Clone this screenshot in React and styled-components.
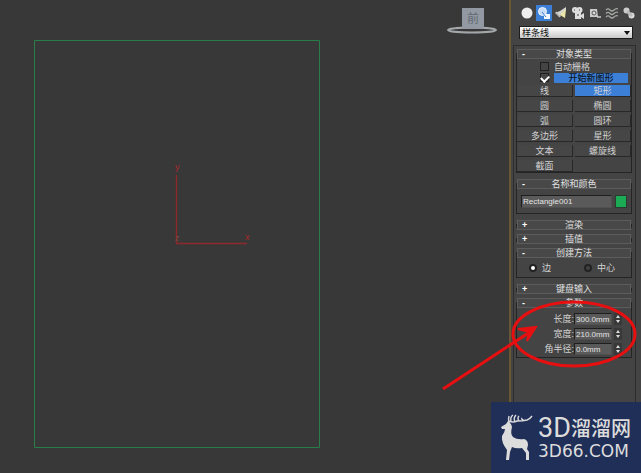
import { useState } from 'react'
import styled, { createGlobalStyle } from 'styled-components'

const GlobalStyle = createGlobalStyle`
  * {
    box-sizing: border-box;
  }

  body {
    margin: 0;
    background: #383838;
    overflow: hidden;
  }

  body, button, input, select {
    font-family: "Liberation Sans", "Noto Sans CJK SC", sans-serif;
    font-size: 9px;
    line-height: 10px;
    color: #d2d2d2;
  }
`

const Page = styled.div`
  display: flex;
  min-height: 100vh;
`

/* Viewport */

const Viewport = styled.main`
  position: relative;
  flex: 1;
  background: #383838;
  border-right: 2px solid #6a5630;
`

const Shape = styled.svg`
  position: absolute;
  left: 34px;
  top: 40px;
  width: 286px;
  height: 408px;
`

const ViewCube = styled.svg`
  position: absolute;
  top: 6px;
  right: 10px;
  width: 54px;
  height: 30px;
`

/* Command panel */

const Panel = styled.aside`
  display: flex;
  flex-direction: column;
  flex: 0 0 130px;
  min-width: 0;
  background: #444;
`

const Toolbar = styled.nav`
  display: flex;
  justify-content: space-between;
  padding: 5px 4px 5px 8px;
`

const Tool = styled.button`
  display: flex;
  align-items: center;
  justify-content: center;
  width: 16px;
  height: 16px;
  padding: 0;
  border: 0;
  background: ${props => props.$active ? '#3c7fd6' : 'transparent'};

  svg {
    width: 14px;
    height: 14px;
  }
`

const Category = styled.div`
  display: flex;
  position: relative;
  margin: 0 8px 6px;

  &::after {
    content: '';
    position: absolute;
    right: 3px;
    top: 5px;
    border: 3px solid transparent;
    border-top: 4px solid #111;
    pointer-events: none;
  }
`

const Select = styled.select`
  flex: 1;
  height: 13px;
  padding: 0 2px;
  appearance: none;
  border: 1px solid #1c1c1c;
  border-radius: 0;
  background: linear-gradient(#fff, #c9c9c9);
  color: #111;
`

const Rollouts = styled.div`
  display: flex;
  flex-direction: column;
  flex: 1;
  margin: 0 5px 0 2px;
  padding: 3px 3px 0 2px;
  border: 1px solid #2d2d2d;
  border-bottom: 0;
`

const Rollout = styled.section`
  position: relative;
  margin-bottom: ${props => props.$open ? '6px' : '4px'};
  padding: 0 1px ${props => props.$open ? '1px' : '0'};

  &::before {
    content: '';
    position: absolute;
    inset: 4px 0 0;
    border: 1px solid #242424;
    border-top: 0;
    pointer-events: none;
    ${props => !props.$open && 'border-bottom: 0; bottom: 2px;'}
  }
`

const Header = styled.button`
  position: relative;
  display: flex;
  align-items: center;
  width: 100%;
  height: 10px;
  padding: 0 12px 0 4px;
  border: 1px solid #5c5c5c;
  background: #484848;
  color: #e0e0e0;

  b {
    width: 8px;
    text-align: left;
    color: #fff;
  }

  span {
    flex: 1;
    text-align: center;
  }
`

const Body = styled.div`
  position: relative;
  padding: 2px 2px 0;
`

const CheckLine = styled.label`
  display: flex;
  align-items: center;
  gap: 5px;
  height: 11px;
  padding-left: 21px;
`

const Check = styled.input.attrs({ type: 'checkbox' })`
  display: grid;
  place-items: center;
  width: 9px;
  height: 9px;
  margin: 0;
  appearance: none;
  border: 1px solid #1f1f1f;
  background: #444;

  &:checked::before {
    content: '';
    width: 6px;
    height: 4px;
    border: solid #fff;
    border-width: 0 0 2px 2px;
    transform: rotate(-45deg);
  }
`

const StartShape = styled.span`
  flex: 1;
  height: 10px;
  margin-right: 1px;
  background: #3c7fd6;
  color: #0c1626;
  font-weight: 500;
  text-align: center;
`

const ButtonGrid = styled.div`
  display: grid;
  grid-template-columns: 1fr 1fr;
  grid-auto-rows: 1fr;
  gap: 3px 2px;
  height: 87px;
  margin: 2px -2px 0;
`

const TypeButton = styled.button`
  padding: 0;
  border: solid #282828;
  border-width: 0 1px 1px 0;
  background: ${props => props.$active ? '#3c7fd6' : '#464646'};
  color: #d2d2d2;
`

const NameLine = styled.div`
  display: flex;
  gap: 3px;
  padding: 4px 2px 5px;
`

const Field = styled.input`
  flex: ${props => props.$short ? '0 0 38px' : '1'};
  min-width: 0;
  width: 38px;
  height: ${props => props.$short ? '12px' : '13px'};
  padding: 0 1px;
  border: 1px solid #1e1e1e;
  border-right-color: #505050;
  border-bottom-color: #505050;
  background: #5a5a5a;
  font-size: 8px;
  color: #e4e4e4;
`

const Swatch = styled.button`
  width: 12px;
  height: 13px;
  padding: 0;
  border: 1px solid #2b3b30;
  background: #1bab55;
`

const RadioLine = styled.div`
  display: flex;
  justify-content: space-between;
  padding: 3px 14px 4px 10px;

  label {
    display: flex;
    align-items: center;
    gap: 5px;
  }
`

const Radio = styled.input.attrs({ type: 'radio' })`
  width: 8px;
  height: 8px;
  margin: 0;
  appearance: none;
  border: 2px solid #222;
  border-radius: 50%;
  background: #444;

  &:checked {
    background: #fff;
  }
`

const Params = styled.div`
  display: flex;
  flex-direction: column;
  gap: 3px;
  padding: 3px 7px 2px 0;
`

const ParamLine = styled.label`
  display: flex;
  align-items: center;
  justify-content: flex-end;
  height: 12px;
`

const Spinner = styled.svg`
  width: 8px;
  height: 12px;
  margin-left: 2px;
  background: #383838;
`

const Annotation = styled.svg`
  position: absolute;
  left: -76px;
  top: 0;
  width: 200px;
  height: 100px;
  overflow: visible;
  pointer-events: none;
`

/* Watermark over the bottom right corner */

const Watermark = styled.footer`
  position: fixed;
  right: 0;
  bottom: 0;
  display: flex;
  align-items: center;
  gap: 3px;
  width: 150px;
  height: 71px;
  padding-left: 8px;
  background: #202f57;
  color: #dcdcdc;

  svg {
    width: 36px;
    height: 48px;
  }
`

const Brand = styled.div`
  white-space: nowrap;
`

const BrandName = styled.div`
  display: flex;
  align-items: center;
  height: 26px;
  font-family: Roboto, sans-serif;
  font-size: 27px;
  line-height: 26px;

  span {
    font-family: "Noto Sans CJK SC", sans-serif;
    font-size: 20px;
    font-weight: 500;
  }
`

const BrandUrl = styled.div`
  font-family: "DejaVu Sans", sans-serif;
  font-size: 17px;
  line-height: 20px;
`

const tools = [
  { name: '创建', icon: <circle cx="7" cy="7" r="5.5" fill="#eee" /> },
  {
    name: '图形',
    icon: (
      <>
        <circle cx="5.5" cy="5.5" r="4" fill="#c9dcf5" stroke="#eef5ff" />
        <path d="M7 8h6v5H7z" fill="#f4f8ff" />
        <path d="M5 6l4 5" stroke="#3c7fd6" />
      </>
    ),
  },
  {
    name: '灯光',
    icon: (
      <>
        <path d="M1 7l5-2 6-4v3L8 9l-3 1z" fill="#d6d6d0" />
        <path d="M6 9l6-6-1 9z" fill="#e9e6a8" />
        <path d="M2 6l4 5" stroke="#bbb" strokeWidth="2" />
      </>
    ),
  },
  {
    name: '摄影机',
    icon: (
      <>
        <circle cx="4" cy="4" r="3" fill="#ddd" />
        <circle cx="8.500" cy="4" r="3" fill="#ddd" />
        <path d="M4 6h6v7H4zM10 9l3-2v6l-3-2z" fill="#ddd" />
        <path d="M3 4h1M8 4h1M6 9h2" stroke="#444" />
      </>
    ),
  },
  {
    name: '辅助对象',
    icon: (
      <>
        <path d="M2 3h7l1 8H2z" fill="#ccc" />
        <circle cx="6" cy="7" r="2" fill="#ddd" stroke="#555" />
        <path d="M9 11h4" stroke="#ccc" strokeWidth="1.5" />
      </>
    ),
  },
  {
    name: '空间扭曲',
    icon: (
      <path
        d="M1 4q2-2 4 0t4 0t4-1M1 7.500q2-2 4 0t4 0t4-1M1 11q2-2 4 0t4 0t4-1"
        fill="none"
        stroke="#a5a9a5"
        strokeWidth="1.2"
      />
    ),
  },
  {
    name: '系统',
    icon: (
      <>
        <circle cx="4.500" cy="4.500" r="3" fill="#ccc" />
        <circle cx="9.500" cy="9.500" r="3" fill="#ddd" />
        <path d="M5 5l5 5" stroke="#bbb" strokeWidth="3" />
      </>
    ),
  },
]

const shapes = ['线', '矩形', '圆', '椭圆', '弧', '圆环', '多边形', '星形', '文本', '螺旋线', '截面']

const params = [
  { label: '长度:', value: '300.0mm' },
  { label: '宽度:', value: '210.0mm' },
  { label: '角半径:', value: '0.0mm' },
]

const Section = ({ title, open, children }) => {
  return (
    <Rollout $open={open}>
      <Header><b>{open ? '-' : '+'}</b><span>{title}</span></Header>
      {children && <Body>{children}</Body>}
    </Rollout>
  )
}

const Deer = () => {
  return (
    <svg viewBox="0 0 36 48" fill="#dcdcdc">
      <path d="M2 13L7 10L9 7L12 10L13 13Q11 20 14 23Q18 26 25 25Q29 26 29 31L28 35L30 38V46H27V39L23 34Q17 35 13 33L11 38L10 46H7L8 36Q2 28 3 22Q6 18 6 15L3 15Z" />
      <path
        d="M10 9Q9 5 10 2M10 7Q14 9 18 7Q24 7 28 6Q31 5 33 2M12 7Q11 3 14 1M16 8Q14 4 17 1M20 7Q18 4 20 2M25 7Q22 5 23 4"
        fill="none"
        stroke="#dcdcdc"
        strokeWidth="1.4"
      />
    </svg>
  )
}

const App = () => {
  const [active, setActive] = useState('矩形')

  return (
    <Page>
      <GlobalStyle />
      <Viewport>
        <Shape viewBox="0 0 286 408">
          <path d="M.5.5h285v407H.5z" fill="none" stroke="#277e48" />
          <path d="M142.500 135v68.500H213" fill="none" stroke="#8f282c" strokeWidth="1.300" />
          <g fill="#a8282c" fontSize="9">
            <text x="141" y="130">y</text>
            <text x="211" y="200">x</text>
            <text x="141" y="201" fill="#7d4a40">z</text>
          </g>
        </Shape>
        <ViewCube viewBox="0 0 54 30">
          <ellipse cx="27" cy="24" rx="24" ry="2.500" fill="none" stroke="#a4a8aa" strokeWidth="2" />
          <path d="M17 2h22v21H17z" fill="#9299a2" />
          <text x="28" y="17" textAnchor="middle" fontSize="12" fill="#626a74">前</text>
        </ViewCube>
      </Viewport>

      <Panel>
        <Toolbar>
          {tools.map(tool => (
            <Tool key={tool.name} aria-label={tool.name} $active={tool.name === '图形'}>
              <svg viewBox="0 0 14 14">{tool.icon}</svg>
            </Tool>
          ))}
        </Toolbar>
        <Category>
          <Select aria-label="类别">
            <option>样条线</option>
          </Select>
        </Category>

        <Rollouts>
          <Section title="对象类型" open>
            <CheckLine><Check />自动栅格</CheckLine>
            <CheckLine><Check defaultChecked /><StartShape>开始新图形</StartShape></CheckLine>
            <ButtonGrid>
              {shapes.map(shape => (
                <TypeButton key={shape} $active={shape === active} onClick={() => setActive(shape)}>
                  {shape}
                </TypeButton>
              ))}
            </ButtonGrid>
          </Section>

          <Section title="名称和颜色" open>
            <NameLine>
              <Field aria-label="名称" defaultValue="Rectangle001" />
              <Swatch aria-label="颜色" />
            </NameLine>
          </Section>

          <Section title="渲染" />
          <Section title="插值" />

          <Section title="创建方法" open>
            <RadioLine>
              <label><Radio name="method" defaultChecked />边</label>
              <label><Radio name="method" />中心</label>
            </RadioLine>
          </Section>

          <Section title="键盘输入" />

          <Section title="参数" open>
            <Params>
              {params.map(param => (
                <ParamLine key={param.label}>
                  {param.label}
                  <Field $short defaultValue={param.value} />
                  <Spinner viewBox="0 0 8 12" fill="#ddd">
                    <path d="M4 2l2 3H2zM4 10l2-3H2z" />
                  </Spinner>
                </ParamLine>
              ))}
            </Params>
            <Annotation viewBox="0 0 200 100" fill="none" stroke="#e80f10" strokeWidth="3">
              <ellipse cx="133" cy="26" rx="61" ry="32" />
              <path d="M2 81L92 22" />
              <path d="M77 21L95 19L86 33L88 24Z" fill="#e80f10" strokeWidth="2" />
            </Annotation>
          </Section>
        </Rollouts>
      </Panel>

      <Watermark>
        <Deer />
        <Brand>
          <BrandName>3D<span>溜溜网</span></BrandName>
          <BrandUrl>3D66.COM</BrandUrl>
        </Brand>
      </Watermark>
    </Page>
  )
}

export default App
